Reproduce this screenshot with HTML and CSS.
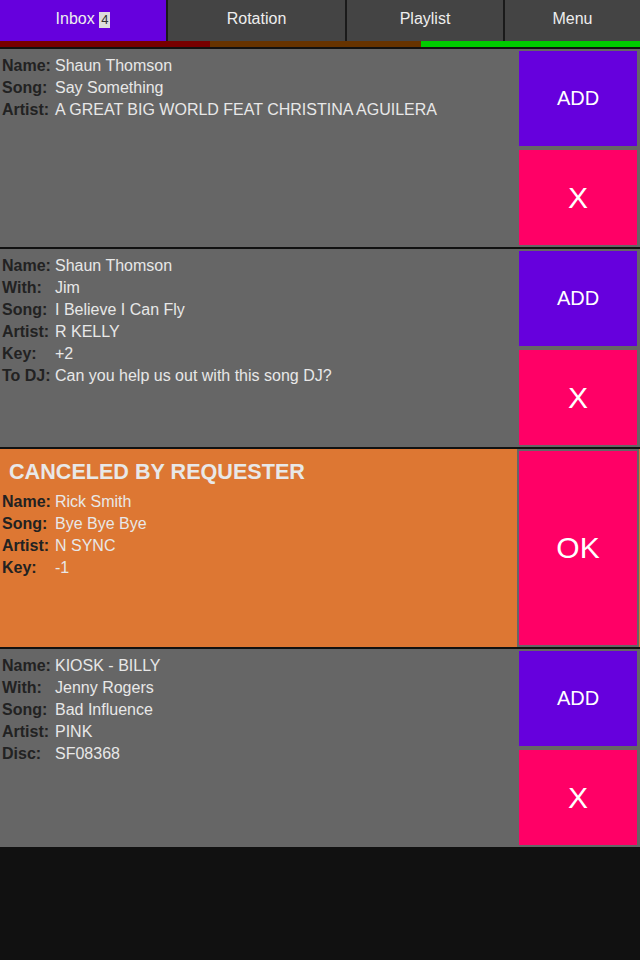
FILE: index.html
```html
<!DOCTYPE html>
<html lang="en">
<head>
  <meta charset="UTF-8" />
  <meta name="viewport" content="width=device-width, initial-scale=1" />
  <title>Inbox</title>
  <link rel="stylesheet" href="styles.css">
</head>
<body>

  <!-- tabs -->
  <nav class="tabs">
    <div class="tab active">Inbox <span class="badge">4</span></div>
    <div class="tab">Rotation</div>
    <div class="tab">Playlist</div>
    <div class="tab">Menu</div>
  </nav>

  <div class="status-bar">
    <div class="seg seg-red"></div>
    <div class="seg seg-brown"></div>
    <div class="seg seg-green"></div>
  </div>

  <!-- requests -->
  <div class="list">

    <div class="card">
      <div class="info">
        <div class="row"><span class="label">Name:</span><span class="value">Shaun Thomson</span></div>
        <div class="row"><span class="label">Song:</span><span class="value">Say Something</span></div>
        <div class="row"><span class="label">Artist:</span><span class="value">A GREAT BIG WORLD FEAT CHRISTINA AGUILERA</span></div>
      </div>
      <div class="actions">
        <button class="btn btn-add">ADD</button>
        <button class="btn btn-x">X</button>
      </div>
    </div>

    <div class="card">
      <div class="info">
        <div class="row"><span class="label">Name:</span><span class="value">Shaun Thomson</span></div>
        <div class="row"><span class="label">With:</span><span class="value">Jim</span></div>
        <div class="row"><span class="label">Song:</span><span class="value">I Believe I Can Fly</span></div>
        <div class="row"><span class="label">Artist:</span><span class="value">R KELLY</span></div>
        <div class="row"><span class="label">Key:</span><span class="value">+2</span></div>
        <div class="row"><span class="label">To DJ:</span><span class="value">Can you help us out with this song DJ?</span></div>
      </div>
      <div class="actions">
        <button class="btn btn-add">ADD</button>
        <button class="btn btn-x">X</button>
      </div>
    </div>

    <div class="card canceled">
      <div class="info">
        <h2 class="notice">CANCELED BY REQUESTER</h2>
        <div class="row"><span class="label">Name:</span><span class="value">Rick Smith</span></div>
        <div class="row"><span class="label">Song:</span><span class="value">Bye Bye Bye</span></div>
        <div class="row"><span class="label">Artist:</span><span class="value">N SYNC</span></div>
        <div class="row"><span class="label">Key:</span><span class="value">-1</span></div>
      </div>
      <div class="actions">
        <button class="btn btn-ok">OK</button>
      </div>
    </div>

    <div class="card">
      <div class="info">
        <div class="row"><span class="label">Name:</span><span class="value">KIOSK - BILLY</span></div>
        <div class="row"><span class="label">With:</span><span class="value">Jenny Rogers</span></div>
        <div class="row"><span class="label">Song:</span><span class="value">Bad Influence</span></div>
        <div class="row"><span class="label">Artist:</span><span class="value">PINK</span></div>
        <div class="row"><span class="label">Disc:</span><span class="value">SF08368</span></div>
      </div>
      <div class="actions">
        <button class="btn btn-add">ADD</button>
        <button class="btn btn-x">X</button>
      </div>
    </div>

  </div>

</body>
</html>
```

FILE: styles.css
```css
body {
  font-family: "Liberation Sans", Arial, sans-serif;
  font-size: 16px;
  background: #111;
  color: #eee;
  margin: 0;
}

.tabs {
  display: grid;
  grid-template-columns: 166px 177px 156px 1fr;
  gap: 2px;
  background: #1a1a1a;
}

.tab {
  background: #444;
  color: #eee;
  height: 41px;
  box-sizing: border-box;
  padding-top: 9px;
  line-height: 20px;
  text-align: center;
}

.tab.active {
  background: #6600dd;
}

.badge {
  display: inline-block;
  background: #ddd;
  color: #333;
  font-size: 13px;
  line-height: 16px;
  padding: 0 2px;
  vertical-align: 0;
}

.status-bar {
  display: flex;
  height: 6px;
  border-bottom: 2px solid #111;
}

.seg-red {
  width: 210px;
  background: #770000;
}

.seg-brown {
  width: 211px;
  background: #663300;
}

.seg-green {
  flex: 1;
  background: #00cc00;
}

.card {
  display: flex;
  height: 198px;
  background: #666;
  border-bottom: 2px solid #111;
  padding-right: 1px;
}

.card.canceled {
  background: #dd7733;
}

.info {
  flex: 1;
  padding: 6px 2px;
}

.row {
  display: flex;
  line-height: 22px;
}

.label {
  width: 53px;
  flex-shrink: 0;
  font-weight: bold;
  color: #222;
}

.value {
  color: #e8e8e8;
}

.notice {
  margin: 4px 0 7px 7px;
  font-size: 21.6px;
  line-height: 25px;
  color: #e8e8e8;
}

.actions {
  width: 122px;
  display: flex;
  flex-direction: column;
}

.btn {
  flex: 1;
  border: 2px solid #666;
  color: #fff;
  font-family: inherit;
  cursor: pointer;
}

.btn-add {
  background: #6600dd;
  font-size: 20px;
}

.btn-x,
.btn-ok {
  background: #ff0066;
  font-size: 30px;
}
```
